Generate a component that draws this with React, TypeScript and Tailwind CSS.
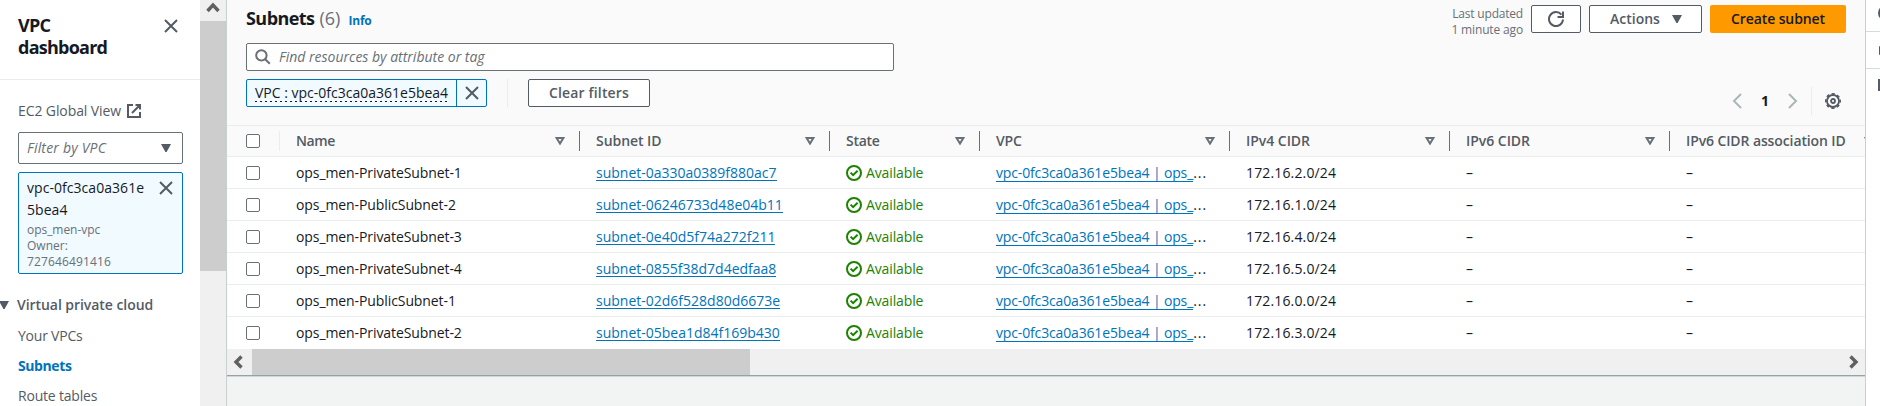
import React from "react";

type Column = { label: string; width: string; tracking: string };

const columns: Column[] = [
  { label: "Name", width: "w-[300px]", tracking: "tracking-[-0.4px]" },
  { label: "Subnet ID", width: "w-[250px]", tracking: "tracking-[-0.05px]" },
  { label: "State", width: "w-[150px]", tracking: "tracking-[-0.3px]" },
  { label: "VPC", width: "w-[250px]", tracking: "tracking-[-0.2px]" },
  { label: "IPv4 CIDR", width: "w-[220px]", tracking: "tracking-[-0.04px]" },
  { label: "IPv6 CIDR", width: "w-[220px]", tracking: "tracking-[-0.04px]" },
];

const subnets = [
  { name: "ops_men-PrivateSubnet-1", id: "subnet-0a330a0389f880ac7", cidr: "172.16.2.0/24" },
  { name: "ops_men-PublicSubnet-2", id: "subnet-06246733d48e04b11", cidr: "172.16.1.0/24" },
  { name: "ops_men-PrivateSubnet-3", id: "subnet-0e40d5f74a272f211", cidr: "172.16.4.0/24" },
  { name: "ops_men-PrivateSubnet-4", id: "subnet-0855f38d7d4edfaa8", cidr: "172.16.5.0/24" },
  { name: "ops_men-PublicSubnet-1", id: "subnet-02d6f528d80d6673e", cidr: "172.16.0.0/24" },
  { name: "ops_men-PrivateSubnet-2", id: "subnet-05bea1d84f169b430", cidr: "172.16.3.0/24" },
];

function CloseIcon() {
  return (
    <svg className="size-4 shrink-0" viewBox="0 0 16 16" fill="none" stroke="#545b64" strokeWidth="2">
      <path d="M2 2l12 12M14 2L2 14" />
    </svg>
  );
}

function CaretDown() {
  return (
    <svg className="size-4 shrink-0" viewBox="0 0 16 16" fill="#545b64">
      <path d="M3 4h10l-4.4 8h-1.2z" />
    </svg>
  );
}

function SortIcon() {
  return (
    <svg className="size-4 shrink-0" viewBox="0 0 16 16" fill="none" stroke="#687078" strokeWidth="2">
      <path d="M4.6 5h6.8L8 10.6z" />
    </svg>
  );
}

function GearIcon() {
  return (
    <svg className="size-4 shrink-0" viewBox="0 0 16 16" fill="none" stroke="#545b64">
      <circle cx="8" cy="8" r="6" strokeWidth="1.8" />
      <circle cx="8" cy="8" r="7.2" strokeWidth="1.6" strokeDasharray="3.2 2.455" strokeDashoffset="1.6" />
      <circle cx="8" cy="8" r="2" strokeWidth="1.8" />
    </svg>
  );
}

function ScrollChevron({ path }: { path: string }) {
  return (
    <svg className="size-4 shrink-0" viewBox="0 0 16 16" fill="none" stroke="#606060" strokeWidth="3.4">
      <path d={path} />
    </svg>
  );
}

function StatusIcon() {
  return (
    <svg className="size-4 shrink-0" viewBox="0 0 16 16" fill="none" stroke="#1d8102" strokeWidth="2">
      <circle cx="8" cy="8" r="7" />
      <path d="M4.6 7.6l2.5 2.6 4.5-4.4" />
    </svg>
  );
}

function Checkbox() {
  return <span className="block size-3.5 shrink-0 rounded-xs border border-[#687078] bg-white" />;
}

function Sidebar() {
  return (
    <nav className="flex w-[200px] shrink-0 flex-col bg-white text-[#545b64]">
      <div className="flex h-20 shrink-0 justify-between border-b border-[#eaeded] pt-[14px] pr-[21px] pl-[18px]">
        <h2 className="w-[110px] text-[18px] leading-[22px] font-bold tracking-[-0.75px] text-[#16191f]">VPC dashboard</h2>
        <div className="pt-1">
          <CloseIcon />
        </div>
      </div>
      <div className="mt-5 flex h-[22px] shrink-0 items-center gap-[5px] pl-[18px]">
        <span className="tracking-[-0.1px]">EC2 Global View</span>
        <svg className="size-4" viewBox="0 0 16 16" fill="none" stroke="#545b64" strokeWidth="2">
          <path d="M7 2H2v12h12V9M9.5 2H14v4.5M14 2L6 10" />
        </svg>
      </div>
      <div className="mt-[10px] ml-[18px] flex h-8 w-[165px] shrink-0 items-center justify-between rounded-xs border border-[#687078] pr-2 pl-2">
        <span className="tracking-[0.2px] text-[#687078] italic">Filter by VPC</span>
        <CaretDown />
      </div>
      <div className="mt-2 ml-[18px] flex h-[102px] w-[165px] shrink-0 justify-between rounded-xs border border-[#0073bb] bg-[#f1faff] pt-1 pr-2 pl-2">
        <div>
          <div className="w-[119px] leading-[22px] tracking-[0.05px] break-all text-[#16191f]">vpc-0fc3ca0a361e5bea4</div>
          <div className="mt-px text-[12px] leading-4 text-[#687078]">
            <div className="tracking-[-0.05px]">ops_men-vpc</div>
            <div>Owner:</div>
            <div className="tracking-[0.15px]">727646491416</div>
          </div>
        </div>
        <div className="pt-[3px]">
          <CloseIcon />
        </div>
      </div>
      <div className="mt-5 flex h-[22px] shrink-0 items-center">
        <svg className="h-2 w-[9px]" viewBox="0 0 9 8" fill="#545b64">
          <path d="M-1 0H9L4.6 8H3.4z" />
        </svg>
        <span className="ml-2 font-semibold tracking-[-0.05px] whitespace-nowrap">Virtual private cloud</span>
      </div>
      <div className="mt-[9px] flex shrink-0 flex-col gap-2 pl-[18px] leading-[22px]">
        <span className="tracking-[-0.22px]">Your VPCs</span>
        <span className="font-bold tracking-[-0.4px] text-[#0073bb]">Subnets</span>
        <span className="tracking-[-0.2px]">Route tables</span>
      </div>
    </nav>
  );
}

function Toolbar() {
  return (
    <div className="flex h-[125px] shrink-0 justify-between bg-[#fafafa] pr-[19px] pl-[19px]">
      <div>
        <div className="flex h-[43px] items-baseline pt-[7px] leading-[22px]">
          <h1 className="text-[18px] font-bold tracking-[-0.55px] text-[#16191f]">Subnets</h1>
          <span className="ml-[5px] text-[18px] text-[#687078]">(6)</span>
          <span className="ml-2 text-[12px] font-bold tracking-[-0.2px] text-[#0073bb]">Info</span>
        </div>
        <div className="flex h-7 w-[648px] items-center rounded-xs border border-[#687078] bg-white pl-2">
          <svg className="size-4" viewBox="0 0 16 16" fill="none" stroke="#687078" strokeWidth="2">
            <circle cx="6.4" cy="6.4" r="5.2" />
            <path d="M10.2 10.2l4.6 4.6" />
          </svg>
          <span className="ml-2 text-[#687078] italic">Find resources by attribute or tag</span>
        </div>
        <div className="mt-2 flex h-7 items-center">
          <div className="flex h-7 w-[241px] items-center rounded-xs border border-[#0073bb] bg-[#f1faff]">
            <div className="flex h-full w-[210px] flex-col items-start border-r border-[#0073bb] pt-[2px] pl-2">
              <span className="h-[19px] leading-[22px] text-[#16191f]">VPC : vpc-0fc3ca0a361e5bea4</span>
              <span className="h-px w-[193px] bg-[repeating-linear-gradient(to_right,#16191f_0_2px,transparent_2px_5px)]" />
            </div>
            <div className="ml-[7px]">
              <CloseIcon />
            </div>
          </div>
          <div className="ml-5 h-7 w-px bg-[#eaeded]" />
          <div className="ml-5 flex h-7 w-[122px] items-center justify-center rounded-xs border border-[#545b64] bg-white font-semibold tracking-[0.15px] text-[#545b64]">
            Clear filters
          </div>
        </div>
      </div>
      <div className="flex flex-col items-end pt-[5px]">
        <div className="flex gap-2 font-semibold text-[#545b64]">
          <div className="pt-px text-right text-[12px] leading-4 font-normal text-[#687078]">
            <div className="tracking-[-0.2px]">Last updated</div>
            <div className="tracking-[-0.15px]">1 minute ago</div>
          </div>
          <div className="flex h-7 w-[50px] items-center justify-center rounded-xs border border-[#545b64] bg-white">
            <svg className="size-4" viewBox="0 0 16 16" fill="none" stroke="#545b64" strokeWidth="2">
              <path d="M15 8.5A7 7 0 1 1 13.4 3.6M15 .5V6H9.5" />
            </svg>
          </div>
          <div className="flex h-7 w-[113px] items-center justify-between rounded-xs border border-[#545b64] bg-white pr-4 pl-5">
            <span>Actions</span>
            <CaretDown />
          </div>
          <div className="flex h-7 w-[136px] items-center justify-center rounded-xs bg-[#ff9900] tracking-[-0.1px] text-[#16191f]">Create subnet</div>
        </div>
        <div className="mt-[49px] flex h-7 items-center pr-[5px]">
          <svg className="size-4" viewBox="0 0 16 16" fill="none" stroke="#aab7b8" strokeWidth="2">
            <path d="M12 1L5 8l7 7" />
          </svg>
          <span className="w-10 text-center font-bold text-[#16191f]">1</span>
          <svg className="size-4" viewBox="0 0 16 16" fill="none" stroke="#aab7b8" strokeWidth="2">
            <path d="M4 1l7 7-7 7" />
          </svg>
          <div className="ml-[10px] h-7 w-px bg-[#eaeded]" />
          <div className="ml-[13px]">
            <GearIcon />
          </div>
        </div>
      </div>
    </div>
  );
}

function SubnetTable() {
  return (
    <div className="flex shrink-0 flex-col overflow-hidden whitespace-nowrap">
      <div className="flex h-8 items-center border-y border-[#eaeded] bg-[#fafafa] font-semibold text-[#545b64]">
        <div className="flex h-5 w-[53px] shrink-0 items-center border-r border-[#eaeded] pl-[19px]">
          <Checkbox />
        </div>
        {columns.map((c) => (
          <div key={c.label} className={`flex h-5 shrink-0 items-center justify-between border-r border-[#687078] pr-[11px] pl-4 ${c.width}`}>
            <span className={c.tracking}>{c.label}</span>
            <SortIcon />
          </div>
        ))}
        <div className="flex shrink-0 items-center pl-4">
          <span className="w-[175px] tracking-[-0.11px]">IPv6 CIDR association ID</span>
          <SortIcon />
        </div>
      </div>
      {subnets.map((s) => (
        <div key={s.id} className="flex h-8 items-center border-b border-[#eaeded] text-[#16191f] last:border-white">
          <div className="w-[53px] shrink-0 pl-[19px]">
            <Checkbox />
          </div>
          <div className="w-[300px] shrink-0 pl-4 tracking-[-0.09px]">{s.name}</div>
          <div className="w-[250px] shrink-0 pl-4">
            <span className="inline-block h-[18px] border-b border-[#0073bb] leading-[19px] text-[#0073bb]">{s.id}</span>
          </div>
          <div className="flex w-[150px] shrink-0 items-center gap-1 pl-4 text-[#1d8102]">
            <StatusIcon />
            <span className="tracking-[-0.12px]">Available</span>
          </div>
          <div className="flex w-[250px] shrink-0 pl-4">
            <span className="h-[19px] border-b border-[#0073bb] leading-[19px] tracking-[-0.15px] text-[#0073bb]">vpc-0fc3ca0a361e5bea4 | ops_</span>
            <span className="leading-[19px] tracking-[1px]">...</span>
          </div>
          <div className="w-[220px] shrink-0 pl-4 tracking-[0.15px]">{s.cidr}</div>
          <div className="w-[220px] shrink-0 pl-4">–</div>
          <div className="shrink-0 pl-4">–</div>
        </div>
      ))}
    </div>
  );
}

function ToolRail() {
  return (
    <aside className="flex w-[15px] shrink-0 flex-col overflow-hidden border-l border-[#c9d0d2] bg-white">
      <div className="flex h-8 shrink-0 items-start border-b border-[#d5dbdb] pt-[5px] pl-3">
        <svg className="size-4 shrink-0" viewBox="0 0 16 16" fill="none" stroke="#545b64" strokeWidth="2">
          <circle cx="8" cy="8" r="7" />
        </svg>
      </div>
      <div className="flex h-[37px] shrink-0 items-center border-b border-[#d5dbdb] pl-[13px]">
        <svg className="h-[9px] w-4 shrink-0" viewBox="0 0 16 9" fill="#545b64">
          <rect width="16" height="9" rx="1" />
        </svg>
      </div>
      <div className="mt-[10px] pl-3">
        <div className="h-3 w-3 bg-[#545b64]" />
      </div>
    </aside>
  );
}

export default function App() {
  return (
    <div className="flex h-[406px] w-[1880px] overflow-hidden bg-[#f2f3f3] font-['Open_Sans','Noto_Sans',sans-serif] text-[14px] leading-[22px]">
      <Sidebar />
      <div className="flex w-[26px] shrink-0 flex-col bg-[#f0f0f0]">
        <div className="flex h-[21px] shrink-0 justify-center">
          <ScrollChevron path="M2.5 11L8 5l5.5 6" />
        </div>
        <div className="h-[250px] bg-[#cdcdcd]" />
      </div>
      <main className="flex w-[1639px] shrink-0 flex-col border-l border-[#c9d0d2]">
        <div className="flex flex-col bg-white">
          <Toolbar />
          <SubnetTable />
          <div className="flex h-[26px] items-center bg-[#f0f0f0]">
            <div className="flex w-[25px] shrink-0 pl-1">
              <ScrollChevron path="M10.5 2.5L5 8l5.5 5.5" />
            </div>
            <div className="h-full w-[498px] bg-[#cdcdcd]" />
            <div className="ml-auto pr-1">
              <ScrollChevron path="M5.5 2.5L11 8l-5.5 5.5" />
            </div>
          </div>
          <div className="h-[2px] border-t border-[#98a2a5] bg-[#d0d6d7]" />
        </div>
      </main>
      <ToolRail />
    </div>
  );
}
